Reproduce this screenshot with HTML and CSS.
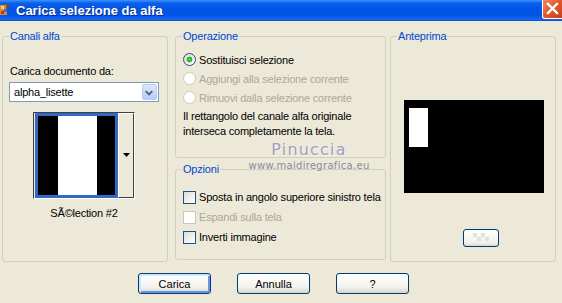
FILE: index.html
```html
<!DOCTYPE html>
<html>
<head>
    <meta charset="UTF-8">
    <title>Carica selezione da alfa</title>
    <link rel="stylesheet" href="styles.css">
</head>
<body>
    <div class="window">
        <!-- barra del titolo -->
        <div class="titlebar">
            <svg class="app_icon" width="9" height="14" viewBox="0 0 9 14">
                <rect x="0" y="2" width="7" height="10" fill="#D98A2B"/>
                <rect x="1" y="3" width="3" height="3" fill="#F4D27A"/>
                <rect x="4" y="6" width="3" height="3" fill="#3B6FD8"/>
                <rect x="1" y="8" width="3" height="3" fill="#C8322A"/>
                <rect x="6" y="1" width="2" height="5" fill="#8A4B1A"/>
            </svg>
            <span class="title">Carica selezione da alfa</span>
            <span class="close">
                <svg width="19" height="18" viewBox="0 0 19 18">
                    <path d="M5 4 L14 13 M14 4 L5 13" stroke="#fff" stroke-width="2.4" stroke-linecap="square"/>
                </svg>
            </span>
        </div>

        <div class="content">
            <fieldset class="group col_left">
                <legend>Canali alfa</legend>
                <div class="doc_label">Carica documento da:</div>
                <div class="combo">
                    <span class="combo_text">alpha_lisette</span>
                    <span class="combo_btn">
                        <svg width="15" height="17" viewBox="0 0 15 17">
                            <path d="M4 7 L7.5 10.5 L11 7" fill="none" stroke="#4D6185" stroke-width="2"/>
                        </svg>
                    </span>
                </div>
                <div class="thumb_wrap">
                    <div class="thumb">
                        <div class="thumb_img">
                            <i class="blk"></i><i class="wht"></i><i class="blk last"></i>
                        </div>
                        <div class="thumb_btn">
                            <svg width="9" height="5" viewBox="0 0 9 5"><path d="M1 0 H8 L4.5 4 Z" fill="#000"/></svg>
                        </div>
                    </div>
                    <div class="thumb_caption">SÃ©lection #2</div>
                </div>
            </fieldset>

            <div class="col_mid">
                <fieldset class="group operazione">
                    <legend>Operazione</legend>
                    <div class="option">
                        <span class="radio checked"></span>
                        <span>Sostituisci selezione</span>
                    </div>
                    <div class="option disabled">
                        <span class="radio"></span>
                        <span>Aggiungi alla selezione corrente</span>
                    </div>
                    <div class="option disabled">
                        <span class="radio"></span>
                        <span>Rimuovi dalla selezione corrente</span>
                    </div>
                    <p class="note">Il rettangolo del canale alfa originale<br>interseca completamente la tela.</p>
                </fieldset>

                <fieldset class="group opzioni">
                    <legend>Opzioni</legend>
                    <div class="option tall">
                        <span class="check"></span>
                        <span>Sposta in angolo superiore sinistro tela</span>
                    </div>
                    <div class="option tall disabled">
                        <span class="check"></span>
                        <span>Espandi sulla tela</span>
                    </div>
                    <div class="option tall">
                        <span class="check"></span>
                        <span>Inverti immagine</span>
                    </div>
                </fieldset>
            </div>

            <fieldset class="group col_right">
                <legend>Anteprima</legend>
                <div class="preview">
                    <div class="preview_sel"></div>
                </div>
                <span class="small_btn">
                    <svg width="16" height="10" viewBox="0 0 16 10">
                        <rect x="0" y="0" width="4" height="4" fill="#E2E2E2"/>
                        <rect x="8" y="0" width="4" height="4" fill="#E2E2E2"/>
                        <rect x="4" y="4" width="4" height="4" fill="#E2E2E2"/>
                        <rect x="12" y="4" width="4" height="4" fill="#E2E2E2"/>
                    </svg>
                </span>
            </fieldset>
        </div>

        <div class="buttons">
            <button class="xp_button default" type="button">Carica</button>
            <button class="xp_button" type="button">Annulla</button>
            <button class="xp_button" type="button">?</button>
        </div>

        <!-- filigrana sopra la finestra -->
        <div class="watermark">
            <div class="wm_name">Pinuccia</div>
            <div class="wm_url">www.maidiregrafica.eu</div>
        </div>
    </div>
</body>
</html>
```

FILE: styles.css
```css
body {
    margin: 0;
    font-family: "Liberation Sans", Arial, sans-serif;
    font-size: 11px;
    color: #000;
}

.window {
    position: relative;
    width: 562px;
    height: 303px;
    background: #ECE9D8;
    overflow: hidden;
}

/* barra del titolo */
.titlebar {
    height: 21px;
    display: flex;
    align-items: center;
    background: linear-gradient(to bottom, #3D95FF 0, #0A5FEA 3px, #0055E5 9px, #0053E2 15px, #1667EE 19px, #0A4FD8 21px);
}

.app_icon {
    margin-top: -2px;
}

.title {
    margin-left: 7px;
    font-weight: bold;
    font-size: 13px;
    color: #fff;
    text-shadow: 1px 1px #0A2A8A;
}

.close {
    margin-left: auto;
    align-self: flex-start;
    width: 19px;
    height: 18px;
    border: 1px solid #fff;
    border-top: none;
    border-right: none;
    border-radius: 0 0 0 3px;
    background: linear-gradient(135deg, #F08A66 0, #E25A2C 45%, #C8401A 100%);
    display: flex;
}

/* area centrale */
.content {
    display: flex;
    align-items: flex-start;
    padding: 9px 6px 0 2px;
    letter-spacing: -0.2px;
}

.group {
    margin: 0;
    padding: 0 7px;
    border: 1px solid #D0D0BF;
    border-radius: 3px;
    min-width: 0;
    box-sizing: border-box;
}

.group legend {
    padding: 0 1px;
    margin-left: -1px;
    line-height: 13px;
    color: #0046D5;
}

.col_left {
    width: 166px;
    height: 232px;
}

.col_mid {
    width: 211px;
    margin-left: 7px;
    display: flex;
    flex-direction: column;
}

.col_right {
    width: 166px;
    height: 232px;
    margin-left: 4px;
}

/* canali alfa */
.doc_label {
    margin-top: 22px;
    line-height: 13px;
}

.combo {
    margin: 4px 0 0 -1px;
    width: 150px;
    height: 20px;
    box-sizing: border-box;
    border: 1px solid #7F9DB9;
    background: #fff;
    display: flex;
    align-items: center;
}

.combo_text {
    flex: 1;
    padding-left: 4px;
}

.combo_btn {
    width: 15px;
    height: 16px;
    margin-right: 1px;
    border: 1px solid #B9CAF7;
    border-radius: 2px;
    box-sizing: border-box;
    background: linear-gradient(to bottom, #DDE8FD, #B7CCF9);
    display: flex;
    overflow: hidden;
}

.combo_btn svg {
    margin: -1px 0 0 -1px;
}

.thumb_wrap {
    width: 102px;
    margin: 10px 0 0 23px;
}

.thumb {
    display: flex;
    border: 1px solid;
    border-color: #404040 #fff #fff #404040;
    padding: 0 0 0 1px;
}

.thumb_img {
    display: flex;
    width: 77px;
    height: 79px;
    border: 3px solid #316AC5;
}

.thumb_img i {
    display: block;
    height: 100%;
}

.thumb_img .blk {
    width: 20px;
    background: #000;
}

.thumb_img .wht {
    width: 39px;
    background: #fff;
}

.thumb_img .last {
    width: 18px;
}

.thumb_btn {
    width: 16px;
    box-sizing: border-box;
    border: 1px solid;
    border-color: #fff #404040 #404040 #fff;
    background: #ECE9D8;
    display: flex;
    align-items: center;
    justify-content: center;
}

.thumb_caption {
    margin-top: 8px;
    text-align: center;
    line-height: 13px;
}

/* operazione e opzioni */
.operazione {
    padding-bottom: 18px;
}

.operazione .option:first-of-type {
    margin-top: 7px;
}

.option {
    display: flex;
    align-items: center;
    height: 19px;
    white-space: nowrap;
}

.option.tall {
    height: 20px;
}

.option.disabled {
    color: #ACA899;
}

.radio,
.check {
    flex-shrink: 0;
    width: 13px;
    height: 13px;
    margin-right: 3px;
    box-sizing: border-box;
    border: 1px solid #1C5180;
}

.radio {
    border-radius: 50%;
    background: linear-gradient(135deg, #DCD7CB, #fff);
}

.radio.checked {
    background: radial-gradient(circle, #6BE36A 0, #21A121 2.5px, transparent 3.2px), linear-gradient(135deg, #DCD7CB, #fff);
}

.check {
    background: linear-gradient(135deg, #DCDCD7, #fff);
}

.disabled .radio,
.disabled .check {
    border-color: #CAC8BB;
    background: #fff;
}

.note {
    margin: 2px 0 0;
    line-height: 15px;
}

.opzioni {
    margin-top: 5px;
    padding-bottom: 12px;
}

.opzioni .option:first-of-type {
    margin-top: 11px;
}

/* anteprima */
.preview {
    width: 140px;
    height: 93px;
    margin: 57px 0 0 6px;
    background: #000;
    padding: 8px 0 0 5px;
    box-sizing: border-box;
}

.preview_sel {
    width: 19px;
    height: 39px;
    background: #fff;
}

.small_btn {
    display: flex;
    align-items: center;
    justify-content: center;
    width: 36px;
    height: 18px;
    margin: 36px 0 0 65px;
    box-sizing: border-box;
    border: 1px solid #003C74;
    border-radius: 3px;
    background: linear-gradient(to bottom, #fff, #F2F1EB 80%, #DCD8CC);
}

/* pulsanti in basso */
.buttons {
    display: flex;
    gap: 26px;
    margin-top: 11px;
    padding-left: 138px;
}

.xp_button {
    width: 73px;
    height: 21px;
    padding: 0;
    border: 1px solid #003C74;
    border-radius: 3px;
    background: linear-gradient(to bottom, #fff, #F3F2EC 70%, #D8D3C6);
    font-family: "Liberation Sans", Arial, sans-serif;
    font-size: 11px;
    color: #000;
}

.xp_button.default {
    box-shadow: inset 1px 1px 0 1px #CEE7FF, inset -1px -1px 0 1px #6B91E0;
}

/* filigrana */
.watermark {
    position: absolute;
    left: 247px;
    top: 140px;
    width: 124px;
    text-align: center;
    pointer-events: none;
}

.wm_name {
    font-family: "DejaVu Sans", sans-serif;
    font-size: 16px;
    line-height: 20px;
    letter-spacing: 1.2px;
    color: #A29EC2;
    text-shadow: 1px 1px rgba(255, 255, 255, 0.6);
}

.wm_url {
    font-family: "DejaVu Sans", sans-serif;
    font-size: 10px;
    line-height: 12px;
    letter-spacing: 0.3px;
    color: #8A8AA2;
}
```
